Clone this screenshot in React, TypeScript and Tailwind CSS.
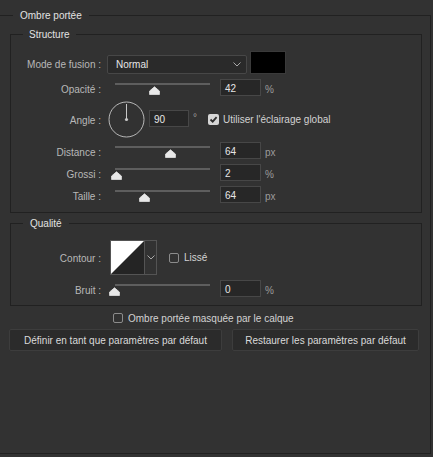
import React from "react";

const font = { fontFamily: '"Liberation Sans", Arial, sans-serif' };

function Chevron() {
  return (
    <svg width="8" height="5" viewBox="0 0 8 5" className="shrink-0">
      <path d="M0.5 0.5 L4 4 L7.5 0.5" fill="none" stroke="#a8a8a8" strokeWidth="1" />
    </svg>
  );
}

function Thumb({ left }: { left: number }) {
  return (
    <svg
      width="11"
      height="9"
      viewBox="0 0 11 9"
      className="absolute top-[7px]"
      style={{ left }}
    >
      <path
        d="M5.5 0.8 L10.4 5 L10.4 8.6 L0.6 8.6 L0.6 5 Z"
        fill="#e8e8e8"
        stroke="#e8e8e8"
        strokeWidth="0.8"
        strokeLinejoin="round"
      />
    </svg>
  );
}

// track runs 6px..101px inside a 107px box, thumb centre given in page x
function Slider({ thumbX }: { thumbX: number }) {
  return (
    <div className="relative ml-[8px] w-[107px] h-[17px] shrink-0">
      <div className="mx-[6px] mt-[4px] h-[2px] bg-[#5e5e5e]" />
      <Thumb left={thumbX - 109 - 5.5} />
    </div>
  );
}

function NumBox({ value }: { value: string }) {
  return (
    <div className="w-[41px] h-[17px] shrink-0 bg-[#272727] border border-[#474747] pl-[4px] pt-[2px] leading-[14px] text-[#e6e6e6]">
      {value}
    </div>
  );
}

function Label({ children }: { children: React.ReactNode }) {
  return <div className="w-[90px] shrink-0 text-right text-[#b8b8b8]">{children}</div>;
}

function SliderRow({
  label,
  thumbX,
  value,
  unit,
}: {
  label: string;
  thumbX: number;
  value: string;
  unit: string;
}) {
  return (
    <div className="flex items-center h-[17px] mt-[5px]">
      <div className="mt-[4px]">
        <Label>{label}</Label>
      </div>
      <Slider thumbX={thumbX} />
      <div className="ml-[4px]">
        <NumBox value={value} />
      </div>
      <span className="ml-[4px] mt-[4px] text-[#9c9c9c]">{unit}</span>
    </div>
  );
}

function Check({ checked }: { checked?: boolean }) {
  if (checked) {
    return (
      <div className="w-[11px] h-[11px] shrink-0 rounded-[2px] bg-[#d6d6d6] flex items-center justify-center">
        <svg width="9" height="9" viewBox="0 0 9 9">
          <path d="M1.5 4.5 L3.7 6.7 L7.6 2.2" fill="none" stroke="#2e2e2e" strokeWidth="1.8" />
        </svg>
      </div>
    );
  }
  return <div className="w-[10px] h-[10px] shrink-0 rounded-[2px] border border-[#8c8c8c]" />;
}

export default function App() {
  return (
    <div className="w-[433px] h-[457px] bg-[#323232] overflow-hidden text-[10px]" style={font}>
      <fieldset className="mt-[7px] w-[431px] h-[447px] border border-l-0 border-[#212121]">
        <legend className="ml-[13px] px-[7px] h-[16px] leading-[17px] text-[#e2e2e2]">Ombre portée</legend>

        {/* Structure */}
        <fieldset className="mt-[3px] ml-[10px] w-[412px] pb-[9px] border border-[#212121]">
          <legend className="ml-[12px] px-[6px] h-[16px] leading-[18px] text-[#e2e2e2]">Structure</legend>

          <div className="flex items-end h-[23px] mt-[9px]">
            <div className="h-[19px] flex items-center">
              <Label>Mode de fusion :</Label>
            </div>
            <div className="ml-[6px] w-[140px] h-[19px] flex items-center justify-between rounded-[2px] bg-[#2a2a2a] border border-[#474747] pl-[8px] pr-[5px] text-[#e6e6e6]">
              <span>Normal</span>
              <Chevron />
            </div>
            <div className="ml-[3px] w-[36px] h-[23px] bg-black border border-[#3a3a3a]" />
          </div>

          <SliderRow label="Opacité :" thumbX={154} value="42" unit="%" />

          <div className="flex items-center h-[36px] mt-[5px]">
            <div className="mt-[2px]">
              <Label>Angle :</Label>
            </div>
            <svg width="37" height="37" viewBox="0 0 37 37" className="ml-[7px] shrink-0">
              <circle cx="18.5" cy="18.5" r="17.5" fill="none" stroke="#b8b8b8" strokeWidth="1" />
              <line x1="18.5" y1="18.5" x2="18.5" y2="3" stroke="#c8c8c8" strokeWidth="1" />
              <circle cx="18.5" cy="18.5" r="1.6" fill="#c8c8c8" />
            </svg>
            <div className="ml-[4px] -mt-[1px]">
              <div className="w-[40px] h-[17px] bg-[#272727] border border-[#474747] pl-[4px] pt-[2px] leading-[14px] text-[#e6e6e6]">
                90
              </div>
            </div>
            <span className="ml-[4px] -mt-[3px] text-[#9c9c9c]">°</span>
            <div className="ml-[11px] flex items-center">
              <Check checked />
              <span className="ml-[4px] text-[#d2d2d2]">Utiliser l'éclairage global</span>
            </div>
          </div>

          <SliderRow label="Distance :" thumbX={170} value="64" unit="px" />
          <SliderRow label="Grossi :" thumbX={116} value="2" unit="%" />
          <SliderRow label="Taille :" thumbX={144} value="64" unit="px" />
        </fieldset>

        {/* Qualité */}
        <fieldset className="mt-[2px] ml-[10px] w-[412px] pb-[8px] border border-[#212121]">
          <legend className="ml-[12px] px-[7px] h-[16px] leading-[18px] text-[#e2e2e2]">Qualité</legend>

          <div className="flex items-center h-[35px] mt-[9px]">
            <div className="mt-[2px]">
              <Label>Contour :</Label>
            </div>
            <div className="ml-[9px] flex h-[35px] border border-[#545454]">
              <svg width="33" height="33" viewBox="0 0 33 33" className="block">
                <rect width="33" height="33" fill="#242424" />
                <polygon points="0,0 33,0 0,33" fill="#ffffff" />
              </svg>
              <div className="w-[12px] border-l border-[#545454] flex items-center justify-center">
                <Chevron />
              </div>
            </div>
            <div className="ml-[12px] flex items-center">
              <Check />
              <span className="ml-[5px] text-[#d2d2d2]">Lissé</span>
            </div>
          </div>

          <SliderRow label="Bruit :" thumbX={114} value="0" unit="%" />
        </fieldset>

        <div className="flex items-center h-[16px] mt-[4px] pl-[113px]">
          <Check />
          <span className="ml-[5px] text-[#d2d2d2]">Ombre portée masquée par le calque</span>
        </div>

        <div className="flex mt-[3px] ml-[9px] gap-[10px]">
          <button className="w-[213px] h-[22px] rounded-[2px] bg-[#2b2b2b] border border-[#3d3d3d] text-[#dadada]">
            Définir en tant que paramètres par défaut
          </button>
          <button className="w-[187px] h-[22px] rounded-[2px] bg-[#2b2b2b] border border-[#3d3d3d] text-[#dadada]">
            Restaurer les paramètres par défaut
          </button>
        </div>
      </fieldset>
    </div>
  );
}
